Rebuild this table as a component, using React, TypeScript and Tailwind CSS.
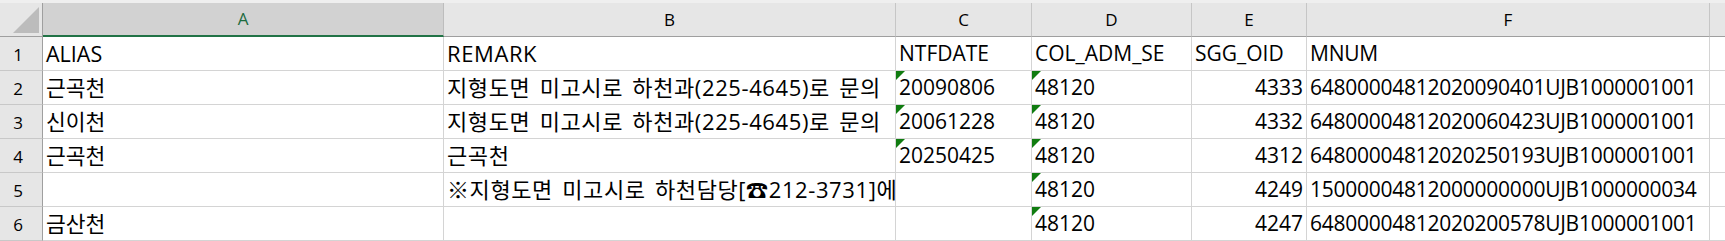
import React from "react";

type Cell = { text: string; align?: "left" | "right"; flag?: boolean };

const columns = ["A", "B", "C", "D", "E", "F"];

// per-column text tweaks so widths line up with the sheet
const colText = [
  "text-[21.5px]",
  "text-[22px] tracking-[0.6px] [word-spacing:3px]",
  "text-[21px]",
  "text-[21px]",
  "text-[21px]",
  "text-[21px] tracking-[-0.25px]",
];

const rows: Cell[][] = [
  [
    { text: "ALIAS" },
    { text: "REMARK" },
    { text: "NTFDATE" },
    { text: "COL_ADM_SE" },
    { text: "SGG_OID" },
    { text: "MNUM" },
  ],
  [
    { text: "근곡천" },
    { text: "지형도면 미고시로 하천과(225-4645)로 문의" },
    { text: "20090806", flag: true },
    { text: "48120", flag: true },
    { text: "4333", align: "right" },
    { text: "64800004812020090401UJB1000001001" },
  ],
  [
    { text: "신이천" },
    { text: "지형도면 미고시로 하천과(225-4645)로 문의" },
    { text: "20061228", flag: true },
    { text: "48120", flag: true },
    { text: "4332", align: "right" },
    { text: "64800004812020060423UJB1000001001" },
  ],
  [
    { text: "근곡천" },
    { text: "근곡천" },
    { text: "20250425", flag: true },
    { text: "48120", flag: true },
    { text: "4312", align: "right" },
    { text: "64800004812020250193UJB1000001001" },
  ],
  [
    { text: "" },
    { text: "※지형도면 미고시로 하천담당[☎212-3731]에 문의" },
    { text: "" },
    { text: "48120", flag: true },
    { text: "4249", align: "right" },
    { text: "15000004812000000000UJB1000000034" },
  ],
  [
    { text: "금산천" },
    { text: "" },
    { text: "" },
    { text: "48120", flag: true },
    { text: "4247", align: "right" },
    { text: "64800004812020200578UJB1000001001" },
  ],
];

function GreenFlag() {
  return (
    <svg className="absolute left-0 top-0" width="9" height="9" viewBox="0 0 9 9">
      <polygon points="0,0 9,0 0,9" fill="#107c10" />
    </svg>
  );
}

export default function App() {
  return (
    <div className="w-[1725px] h-[241px] overflow-hidden bg-white text-black font-['Open_Sans','Noto_Sans_CJK_KR',sans-serif]">
      <div className="h-[3px] bg-[#efefef]" />
      <div className="grid grid-cols-[43px_401px_452px_136px_160px_115px_403px_15px]">
        {/* corner */}
        <div className="h-[34px] bg-[#e6e6e6] border-r border-b border-[#9f9f9f] flex items-end justify-end pr-[3px] pb-[3px]">
          <svg width="26" height="26" viewBox="0 0 26 26">
            <polygon points="26,0 26,26 0,26" fill="#bcbcbc" />
          </svg>
        </div>
        {columns.map((c) =>
          c === "A" ? (
            <div
              key={c}
              className="h-[34px] bg-[#d2d2d2] border-r border-r-[#bdbdbd] border-b-2 border-b-[#217346] flex items-center justify-center text-[17px] text-[#1d6b3e]"
            >
              {c}
            </div>
          ) : (
            <div
              key={c}
              className="h-[34px] bg-[#e6e6e6] border-r border-r-[#c6c6c6] border-b border-b-[#9f9f9f] flex items-center justify-center text-[17px]"
            >
              {c}
            </div>
          )
        )}
        <div className="h-[34px] bg-[#e6e6e6] border-b border-b-[#9f9f9f]" />

        {rows.map((row, i) => (
          <React.Fragment key={i}>
            <div className="h-[34px] bg-[#e6e6e6] border-r border-r-[#9f9f9f] border-b border-b-[#c8c8c8] flex items-center justify-center pr-[6px] pt-[2px] text-[17px]">
              {i + 1}
            </div>
            {row.map((cell, j) => (
              <div
                key={j}
                className={`relative h-[34px] overflow-hidden whitespace-nowrap border-r border-b border-[#d4d4d4] px-[3px] leading-[33px] ${colText[j]} ${
                  cell.align === "right" ? "text-right" : "text-left"
                }`}
              >
                {cell.flag && <GreenFlag />}
                {cell.text}
              </div>
            ))}
            <div className="h-[34px] border-b border-[#d4d4d4]" />
          </React.Fragment>
        ))}
      </div>
    </div>
  );
}
